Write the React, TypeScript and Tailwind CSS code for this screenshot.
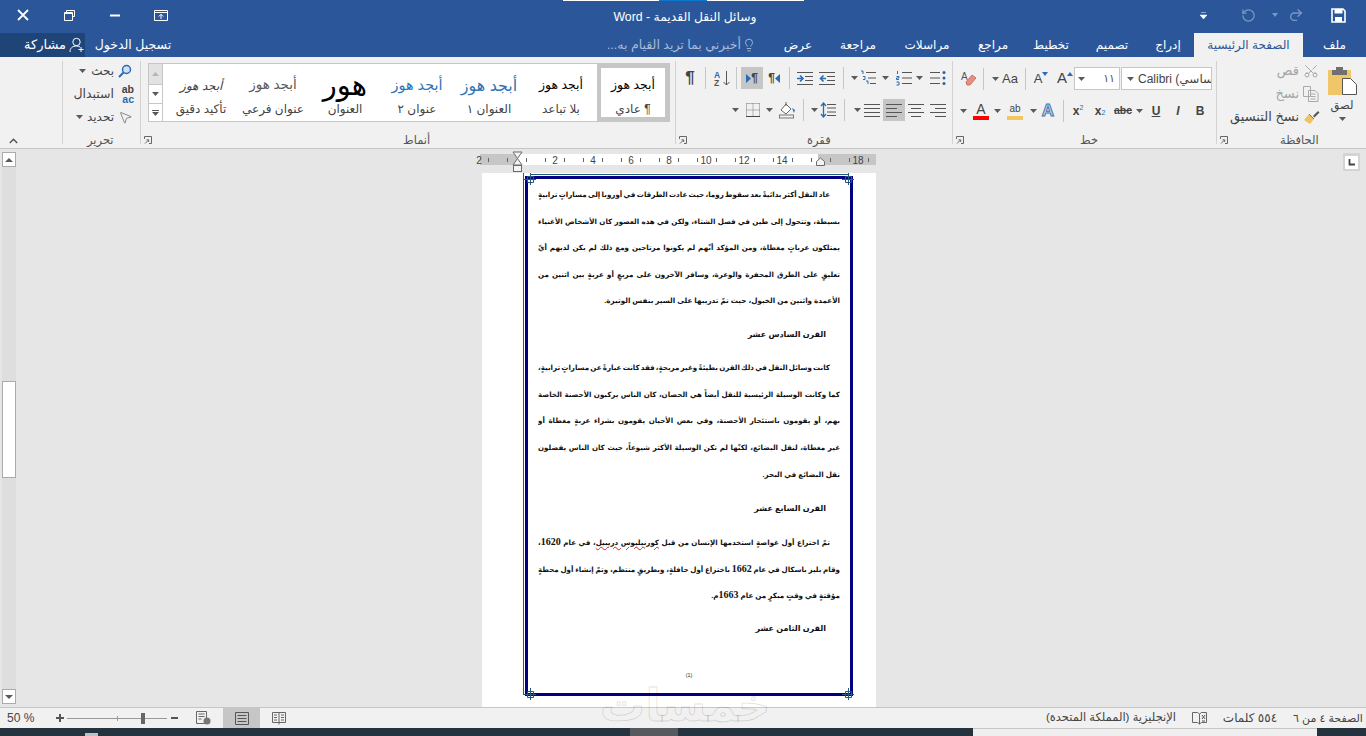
import React from "react";
import { RotateCcw, Redo2, Lightbulb, Scissors, MousePointer2 } from "lucide-react";

type P = { c?: string; children?: React.ReactNode };

const Drop = ({ c = "" }: { c?: string }) => (
  <span className={`flex h-[22px] w-[12px] shrink-0 items-center justify-center ${c}`}>
    <svg width="7" height="4"><path d="M0 0h7L3.5 4z" fill="#5a5a5a" /></svg>
  </span>
);
const Sep = ({ c = "" }: P) => <span className={`h-[22px] w-px shrink-0 bg-[#c6c6c6] ${c}`} />;
const Box = ({ c = "", children }: P) => (
  <span className={`flex h-[22px] shrink-0 items-center justify-center text-[#444] ${c}`}>{children}</span>
);

const Lines = ({ kind }: { kind: "j" | "l" | "c" | "r" }) => {
  const ys = [1.5, 5.5, 9.5, 13.5];
  const sp: Record<string, [number, number][]> = {
    j: [[0, 16], [0, 16], [0, 16], [0, 16]],
    l: [[0, 16], [0, 11], [0, 16], [0, 11]],
    c: [[0, 16], [3, 13], [0, 16], [3, 13]],
    r: [[0, 16], [5, 16], [0, 16], [5, 16]],
  };
  return (
    <svg width="16" height="15">
      {ys.map((y, i) => (
        <line key={y} x1={sp[kind][i][0]} x2={sp[kind][i][1]} y1={y} y2={y} stroke="#555" />
      ))}
    </svg>
  );
};

const Launcher = () => (
  <svg width="8" height="8" className="shrink-0">
    <path d="M.5 3V.5H7.5V7.5H5" fill="none" stroke="#666" />
    <path d="M1 7.5L4.5 4M2.5 3.8h2.2V6" fill="none" stroke="#666" />
  </svg>
);

const Indent = ({ out }: { out?: boolean }) => (
  <svg width="16" height="15">
    <path d="M0 1.5h16M8 5.5h8M8 9.5h8M0 13.5h16" stroke="#555" />
    {out ? <path d="M7 7.5H2M4.5 4.5L1.5 7.5l3 3" stroke="#2b6cb0" strokeWidth="1.6" fill="none" /> : <path d="M0 7.5h5M3 4.5l3 3-3 3" stroke="#2b6cb0" strokeWidth="1.6" fill="none" />}
  </svg>
);

const Group = ({ w, label, launcher, labelC = "", children }: { w: string; label?: string; launcher?: boolean; labelC?: string; children?: React.ReactNode }) => (
  <section className={`${w} flex h-[83px] shrink-0 flex-col border-l border-[#d2d2d2]`}>
    <div className="h-[72px] shrink-0">{children}</div>
    <div className="flex h-[14px] shrink-0 items-center pl-[3px]">
      {launcher && <Launcher />}
      {label && <span dir="rtl" className={`text-[11.5px] leading-[14px] text-[#555] ${labelC}`}>{label}</span>}
    </div>
  </section>
);

const Style = ({ sample, label, s, sel }: { sample: string; label: string; s: string; sel?: boolean }) => (
  <div className={`flex h-full w-[72px] shrink-0 flex-col items-center ${sel ? "border-[4px] border-[#c6c6c6]" : "border-[4px] border-transparent"}`}>
    <div dir="rtl" className={`flex h-[35px] items-center whitespace-nowrap ${s}`}>{sample}</div>
    <div dir="rtl" className="h-[12px] whitespace-nowrap text-[12px] leading-[12px] text-[#444]">{label}</div>
  </div>
);

const Body = ({ children, c = "" }: P) => <div dir="rtl" className={`h-[26.5px] overflow-hidden text-justify text-[7.1px] leading-[26.5px] [text-align-last:justify] [word-spacing:-1.5px] ${c}`}>{children}</div>;
const Last = ({ children, c = "" }: P) => <div dir="rtl" className={`h-[26.5px] whitespace-nowrap text-[7.2px] leading-[26.5px] ${c}`}>{children}</div>;
const Head = ({ children }: P) => <div dir="rtl" className="mt-[7px] h-[26.5px] whitespace-nowrap pr-[14px] text-[8px] leading-[26.5px]">{children}</div>;
const Num = ({ children }: P) => <span className="font-['Liberation_Serif',serif] text-[10px]">{children}</span>;
const Corner = ({ c, d }: { c: string; d: string }) => (
  <svg width="12" height="12" className={`absolute ${c}`}>
    <path d={d} fill="none" stroke="#1f5a80" />
  </svg>
);

export default function App() {
  const tick = [];
  for (let x = 488; x < 876; x += 19) tick.push(x - 480);
  const nums: [number, string][] = [[479, "2"], [555, "2"], [593, "4"], [631, "6"], [669, "8"], [706, "10"], [744, "12"], [782, "14"], [858, "18"]];
  return (
    <div className="relative flex h-[736px] w-[1366px] flex-col overflow-hidden bg-[#e6e6e6] font-['Liberation_Sans','DejaVu_Sans',sans-serif] text-[#444]">
      {/* title bar */}
      <header className="flex h-[33px] shrink-0 flex-col bg-[#2b579a] text-white">
        <div className="flex h-px">
          <div className="ml-[563px] w-[96px] bg-white" />
          <div className="w-[48px] bg-[#0a78d0]" />
          <div className="w-[97px] bg-white" />
        </div>
        <div className="flex h-[32px] items-center">
          <div className="mb-[4px] flex w-[184px] items-center">
            <span className="flex w-[46px] justify-center">
              <svg width="12" height="12"><path d="M1 1l10 10M11 1L1 11" stroke="#fff" strokeWidth="1.8" /></svg>
            </span>
            <span className="flex w-[46px] justify-center">
              <svg width="11" height="11"><path d="M2.5 2.5V.5h8v6h-2" fill="none" stroke="#fff" /><path d="M.5 2.5h8v8h-8z" fill="none" stroke="#fff" /><path d="M.5 3.5h8" stroke="#fff" /></svg>
            </span>
            <span className="flex w-[46px] justify-center">
              <svg width="10" height="3"><path d="M0 1.5h10" stroke="#fff" strokeWidth="2" /></svg>
            </span>
            <span className="flex w-[46px] justify-center">
              <svg width="14" height="11"><path d="M.5 .5h13v10H.5zM.5 2.5h13" fill="none" stroke="#fff" /><path d="M7 9V4.5M4.8 6.5L7 4.3l2.2 2.2" fill="none" stroke="#fff" /></svg>
            </span>
          </div>
          <div dir="rtl" className="ml-[401px] w-[200px] text-center text-[12.300px] leading-[16px] text-white">وسائل النقل القديمة - Word</div>
          <div className="ml-auto mb-[4px] flex items-center pr-[16px]">
            <span className="flex w-[16px] justify-center">
              <svg width="7" height="7"><path d="M1 .5h5M0 3h7L3.5 7z" fill="#fff" stroke="#fff" strokeWidth=".5" /></svg>
            </span>
            <span className="ml-[25px] flex w-[24px] justify-center text-[#7a97c6]"><RotateCcw size={15} strokeWidth={2} /></span>
            <span className="ml-[9px] flex w-[12px] justify-center">
              <svg width="6" height="4"><path d="M0 0h6L3 4z" fill="#7a97c6" /></svg>
            </span>
            <span className="ml-[3px] flex w-[24px] justify-center text-[#7a97c6]"><Redo2 size={16} strokeWidth={2} /></span>
            <span className="ml-[18px] flex w-[24px] justify-center">
              <svg width="15" height="15"><path d="M1 1h11l2 2v11H1z" fill="none" stroke="#fff" strokeWidth="1.6" /><path d="M3.5 1h8v4.5h-8z" fill="#fff" /><path d="M4 9h7v5H4z" fill="#fff" /></svg>
            </span>
          </div>
        </div>
      </header>

      {/* tabs */}
      <nav className="flex h-[24px] shrink-0 items-center bg-[#2b579a] text-[12px] text-white">
        <div dir="rtl" className="flex h-full w-[85px] flex-row-reverse items-center justify-end gap-[3px] bg-[#1e4478] pl-[11px] text-[13px]">
          <span className="whitespace-nowrap">مشاركة</span>
          <svg width="16" height="16" className="shrink-0">
            <circle cx="7.5" cy="5" r="3.7" fill="none" stroke="#fff" />
            <path d="M1 15c0-4 2.5-6 6.500-6 1.500 0 2.500.3 3.500 1" fill="none" stroke="#fff" />
            <path d="M12 10v5M9.500 12.500h5" stroke="#fff" />
          </svg>
        </div>
        <div dir="rtl" className="w-[96px] whitespace-nowrap text-center text-[12.500px]">تسجيل الدخول</div>
        <div dir="rtl" className="ml-[426px] w-[134px] whitespace-nowrap text-center text-[12.500px] text-[#a8bbd8]">أخبرني بما تريد القيام به...</div>
        <span className="flex w-[27px] justify-start pl-[1px] text-[#b9c9e0]"><Lightbulb size={14} strokeWidth={1.4} /></span>
        {[
          ["w-[60px]", "عرض"],
          ["w-[60px]", "مراجعة"],
          ["w-[78px]", "مراسلات"],
          ["w-[54px]", "مراجع"],
          ["w-[62px]", "تخطيط"],
          ["w-[60px]", "تصميم"],
          ["w-[52px]", "إدراج"],
        ].map(([w, t]) => (
          <div key={t} dir="rtl" className={`${w} whitespace-nowrap text-center`}>{t}</div>
        ))}
        <div dir="rtl" className="flex h-full w-[109px] items-center justify-center whitespace-nowrap bg-[#f1f1f1] text-[#2b579a]">الصفحة الرئيسية</div>
        <div dir="rtl" className="w-[63px] text-center">ملف</div>
      </nav>

      {/* ribbon */}
      <div className="flex h-[92px] shrink-0 border-b border-[#c6c6c6] bg-[#f1f1f1] pt-[4px]">
        <div className="flex h-[83px] w-[62px] shrink-0 items-end pl-[9px]">
          <svg width="9" height="6"><path d="M.8 5L4.500 1.300 8.200 5" fill="none" stroke="#555" strokeWidth="1.5" /></svg>
        </div>

        {/* editing */}
        <Group w="w-[78px]" label="تحرير" labelC="ml-[21px]">
          <div className="flex flex-col gap-[3px] pr-[6px] text-[12px] text-[#444]">
            <div className="flex h-[20px] items-center justify-end">
              <Drop />
              <span dir="rtl" className="ml-[3px] whitespace-nowrap">بحث</span>
              <span className="ml-[2px] flex w-[18px] justify-center">
                <svg width="14" height="14"><circle cx="8.500" cy="5.500" r="4" fill="#cfe0f3" stroke="#2b6cb0" strokeWidth="1.5" /><path d="M5.500 8.500L1 13" stroke="#2b6cb0" strokeWidth="2" /></svg>
              </span>
            </div>
            <div className="flex h-[20px] items-center justify-end">
              <span dir="rtl" className="whitespace-nowrap text-[12.500px]">استبدال</span>
              <span className="ml-[2px] flex w-[18px] flex-col items-end text-[10.500px] font-bold leading-[10px]">
                <span className="text-[#444]">ab</span>
                <span className="text-[#2b6cb0]">ac</span>
              </span>
            </div>
            <div className="flex h-[20px] items-center justify-end">
              <Drop />
              <span dir="rtl" className="ml-[1px] whitespace-nowrap">تحديد</span>
              <span className="ml-[2px] flex w-[18px] justify-center text-[#666]"><MousePointer2 size={15} strokeWidth={1.2} className="rotate-[0deg]" /></span>
            </div>
          </div>
        </Group>

        {/* styles */}
        <Group w="w-[535px]" label="أنماط" launcher labelC="ml-[251px]">
          <div className="ml-[7px] mt-[2px] flex h-[59px] w-[522px] border border-[#c6c6c6] bg-white">
            <div className="flex w-[14px] shrink-0 flex-col border-r border-[#c6c6c6]">
              <div className="flex h-[20px] items-center justify-center bg-[#e2e2e2]"><svg width="7" height="4"><path d="M0 4h7L3.500 0z" fill="#b5b5b5" /></svg></div>
              <div className="flex h-[19px] items-center justify-center border-t border-[#c6c6c6]"><svg width="7" height="4"><path d="M0 0h7L3.500 4z" fill="#5a5a5a" /></svg></div>
              <div className="flex h-[18px] flex-col items-center justify-center gap-[1px] border-t border-[#c6c6c6]"><div className="h-px w-[7px] bg-[#5a5a5a]" /><svg width="7" height="4"><path d="M0 0h7L3.500 4z" fill="#5a5a5a" /></svg></div>
            </div>
            <div className="flex h-full flex-1 items-stretch pl-[2px]">
              <Style sample="أبجد هوز" label="تأكيد دقيق" s="text-[12px] italic text-[#404040]" />
              <Style sample="أبجد هوز" label="عنوان فرعي" s="text-[13.500px] text-[#5a5a5a]" />
              <Style sample="هور" label="العنوان" s="text-[29px] text-black" />
              <Style sample="أبجد هوز" label="عنوان ٢" s="text-[14.500px] text-[#2e74b5]" />
              <Style sample="أبجد هوز" label="العنوان ١" s="text-[16px] text-[#2e74b5]" />
              <Style sample="أبجد هوز" label="بلا تباعد" s="text-[12.500px] text-black" />
              <Style sample="أبجد هوز" label="¶ عادي" s="text-[12.500px] text-black" sel />
            </div>
          </div>
        </Group>

        {/* paragraph */}
        <Group w="w-[277px]" label="فقرة" launcher labelC="ml-[120px]">
          <div className="flex flex-col gap-[10px] pt-[6px]">
            <div className="flex items-center">
              <Box c="ml-[3px] w-[22px] text-[17px] font-bold">¶</Box>
              <Sep c="ml-[4px]" />
              <Box c="ml-[5px] w-[22px]">
                <svg width="17" height="17"><text x="0" y="8" fontSize="8.500" fontWeight="700" fill="#2b6cb0">A</text><text x="0" y="16" fontSize="8.500" fontWeight="700" fill="#555">Z</text><path d="M12.500 1v14M9.500 12l3 3 3-3" fill="none" stroke="#555" /></svg>
              </Box>
              <Sep c="ml-[3px]" />
              <Box c="ml-[4px] w-[22px] bg-[#c6c6c6] text-[12px] font-bold">
                <svg width="5" height="9"><path d="M0 0l5 4.500L0 9z" fill="#2b6cb0" /></svg>¶
              </Box>
              <Box c="w-[22px] text-[12px] font-bold">
                ¶<svg width="5" height="9"><path d="M5 0L0 4.500 5 9z" fill="#2b6cb0" /></svg>
              </Box>
              <Sep c="ml-[4px]" />
              <Box c="ml-[4px] w-[22px]"><Indent /></Box>
              <Box c="w-[22px]"><Indent out /></Box>
              <Sep c="ml-[5px]" />
              <Drop c="ml-[4px]" />
              <Box c="w-[16px]">
                <svg width="16" height="16"><path d="M6 2.500h10M8 8h8M10 13.500h6" stroke="#555" /><path d="M1 1h2v3M3 6.500h2v3H3M6 11h2v3" fill="none" stroke="#2b6cb0" /></svg>
              </Box>
              <Drop c="ml-[3px]" />
              <Box c="ml-[5px] w-[16px]">
                <svg width="16" height="16"><path d="M6 2.500h10M6 8h10M6 13.500h10" stroke="#555" /><path d="M1.500 1v3M.5 6.500h2.500v1.500H.5v1.500H3M.5 12h2.500v3H.5" fill="none" stroke="#2b6cb0" /></svg>
              </Box>
              <Drop c="ml-[1px]" />
              <Box c="ml-[5px] w-[16px]">
                <svg width="16" height="16"><path d="M0 2.500h10M0 8h10M0 13.500h10" stroke="#555" /><circle cx="14" cy="2.500" r="1.500" fill="#2b5f9e" /><circle cx="14" cy="8" r="1.500" fill="#2b5f9e" /><circle cx="14" cy="13.500" r="1.500" fill="#2b5f9e" /></svg>
              </Box>
            </div>
            <div className="flex items-center">
              <Drop c="ml-[53px]" />
              <Box c="ml-[4px] w-[16px]">
                <svg width="14" height="14"><path d="M.5 .5h13M.5 7h13M.5 .5v13M7 .5v13M13.500 .5v13" stroke="#777" strokeDasharray="1 1" /><path d="M0 13.500h14" stroke="#444" /></svg>
              </Box>
              <Drop c="ml-[2px]" />
              <Box c="ml-[3px] w-[18px]">
                <svg width="18" height="18"><path d="M3 9l5-6 5 5-5 5z" fill="#fff" stroke="#666" /><path d="M8 1v4" stroke="#666" /><path d="M14 7l3 2-1 3z" fill="#2b6cb0" /><rect x="1.500" y="14" width="14" height="3" fill="#f1f1f1" stroke="#777" /></svg>
              </Box>
              <Sep c="ml-[7px]" />
              <Drop c="ml-[4px]" />
              <Box c="w-[16px]">
                <svg width="16" height="16"><path d="M7 2.500h9M7 6h9M7 10h9M7 13.500h9" stroke="#555" /><path d="M3.500 2v12M1 4l2.500-3L6 4M1 12l2.500 3L6 12" fill="none" stroke="#2b6cb0" strokeWidth="1.300" /></svg>
              </Box>
              <Sep c="ml-[8px]" />
              <Drop c="ml-[6px]" />
              <Box c="w-[18px]"><Lines kind="j" /></Box>
              <Box c="ml-[2px] w-[22px] bg-[#c6c6c6]"><Lines kind="l" /></Box>
              <Box c="w-[22px]"><Lines kind="c" /></Box>
              <Box c="w-[22px]"><Lines kind="r" /></Box>
            </div>
          </div>
        </Group>

        {/* font */}
        <Group w="w-[264px]" label="خط" launcher labelC="ml-[116px]">
          <div className="flex flex-col gap-[10px] pt-[6px]">
            <div className="flex items-center">
              <Box c="ml-[7px] w-[18px]">
                <svg width="16" height="16"><text x="0" y="9" fontSize="10" fill="#555">A</text><path d="M5 11l6-7 4 3-6 7H6z" fill="#e88d84" stroke="#d27068" /></svg>
              </Box>
              <Sep c="ml-[5px]" />
              <Drop c="ml-[5px]" />
              <Box c="w-[18px] text-[13px]">Aa</Box>
              <Sep c="ml-[6px]" />
              <Box c="ml-[6px] w-[18px] text-[13px] relative">A<svg width="6" height="4" className="mb-[9px]"><path d="M0 0h6L3 4z" fill="#2b6cb0" /></svg></Box>
              <Box c="ml-[6px] w-[18px] text-[15px]">A<svg width="6" height="4" className="mb-[10px]"><path d="M0 4h6L3 0z" fill="#2b6cb0" /></svg></Box>
              <div className="flex h-[23px] w-[46px] shrink-0 items-center border border-[#c6c6c6] bg-white">
                <Drop />
                <span className="ml-auto pr-[4px] text-[11px] text-[#555]">١١</span>
              </div>
              <div className="ml-px flex h-[23px] w-[91px] shrink-0 items-center overflow-hidden border border-[#c6c6c6] bg-white">
                <Drop c="ml-[2px]" />
                <span className="ml-[2px] whitespace-nowrap text-[12px] text-[#444]">Calibri (أساسي)</span>
              </div>
            </div>
            <div className="flex items-center">
              <Drop c="ml-[4px]" />
              <Box c="ml-[3px] h-[18px] w-[18px] flex-col">
                <span className="text-[14px] leading-[14px]">A</span>
                <span className="h-[4px] w-[16px] bg-[#ff0000]" />
              </Box>
              <Drop c="ml-px" />
              <Box c="ml-[3px] h-[18px] w-[18px] flex-col">
                <span className="text-[10px] leading-[14px]">ab</span>
                <span className="h-[4px] w-[16px] bg-[#f2c75c]" />
              </Box>
              <Drop c="ml-[3px]" />
              <Box c="w-[18px] text-[17px] font-bold text-[#cfe0f3] [-webkit-text-stroke:1px_#3a72b0]">A</Box>
              <Sep c="ml-[6px]" />
              <Box c="ml-[4px] w-[20px] text-[12px] font-bold">x<sup className="text-[7px] font-normal text-[#2b6cb0]">2</sup></Box>
              <Box c="ml-[2px] w-[20px] text-[12px] font-bold">x<sub className="text-[7px] font-normal text-[#2b6cb0]">2</sub></Box>
              <Box c="ml-[2px] w-[22px] text-[10.500px] font-bold line-through">abc</Box>
              <Drop c="-ml-px" />
              <Box c="ml-[2px] w-[18px] text-[12px] font-bold underline">U</Box>
              <Box c="ml-[4px] w-[18px] text-[12px] italic font-bold">I</Box>
              <Box c="ml-[4px] w-[18px] text-[12px] font-bold">B</Box>
            </div>
          </div>
        </Group>

        {/* clipboard */}
        <Group w="w-[150px]" label="الحافظة" launcher labelC="ml-[52px]">
          <div className="flex">
            <div className="flex w-[103px] flex-col gap-[3px] text-[13px]">
              <div className="flex h-[20px] items-center justify-end text-[#a4a4a4]">
                <span dir="rtl">قص</span>
                <span className="ml-[3px] flex w-[18px] justify-center"><Scissors size={16} strokeWidth={1.4} className="-rotate-90" /></span>
              </div>
              <div className="flex h-[20px] items-center justify-end text-[#a4a4a4]">
                <span dir="rtl">نسخ</span>
                <span className="ml-[3px] flex w-[18px] justify-center">
                  <svg width="16" height="16"><path d="M.5 .5h7v10h-7zM5.500 4.500H12l3 3v8H5.500zM7.500 8h5M7.500 10.500h5M7.500 13h5" fill="#f1f1f1" stroke="#a9a9a9" /></svg>
                </span>
              </div>
              <div className="flex h-[20px] items-center justify-end text-[#444]">
                <span dir="rtl" className="whitespace-nowrap">نسخ التنسيق</span>
                <span className="ml-[3px] flex w-[18px] justify-center">
                  <svg width="17" height="15"><path d="M1 10l5-6 5 5-4 5z" fill="#efc263" /><path d="M10 6l5-5 1.500 1.500-5 5" fill="#555" /><path d="M6 4l5 5" stroke="#777" /></svg>
                </span>
              </div>
            </div>
            <div className="flex w-[44px] flex-col items-center pt-[6px]">
              <svg width="29" height="28">
                <rect x="0" y="3" width="23" height="25" fill="#f0c668" />
                <rect x="4" y="3" width="15" height="5" fill="#707070" />
                <rect x="8" y="0" width="7" height="4" fill="#707070" />
                <path d="M3 11h.01M7 15h.01M11 12h.01M4 19h.01M9 21h.01M5 24h.01" stroke="#e58c6f" strokeWidth="1.500" />
                <path d="M14.500 11.500h8l6 6v10h-14z" fill="#fff" stroke="#555" />
              </svg>
              <span dir="rtl" className="mt-[3px] text-[11.5px] leading-[15px] text-[#444]">لصق</span>
              <svg width="7" height="4" className="mt-[4px]"><path d="M0 0h7L3.500 4z" fill="#5a5a5a" /></svg>
            </div>
          </div>
        </Group>
      </div>

      {/* document */}
      <main className="flex h-[558px] shrink-0">
        <div className="flex w-[16px] shrink-0 flex-col pb-[3px] pl-[2px] pt-[3px]">
          <div className="flex h-[15px] w-[14px] items-center justify-center border border-[#ababab] bg-white"><svg width="8" height="4"><path d="M0 4h8L4 0z" fill="#5a5a5a" /></svg></div>
          <div className="flex-1 bg-[#dedede] pt-[214px]"><div className="h-[97px] w-[14px] border border-[#ababab] bg-white" /></div>
          <div className="flex h-[15px] w-[14px] items-center justify-center border border-[#ababab] bg-white"><svg width="8" height="4"><path d="M0 0h8L4 4z" fill="#5a5a5a" /></svg></div>
        </div>

        <div className="ml-[466px] flex h-full w-[394px] shrink-0 flex-col pt-[5px]">
          <svg width="396" height="11" className="-ml-[2px] mb-[8px] shrink-0 overflow-visible">
            <rect x="0" y="0" width="396" height="11" fill="#c6c6c6" />
            <rect x="37" y="0" width="301" height="11" fill="#fff" />
            {tick.map((x) => (
              <line key={x} x1={x + 0.5} x2={x + 0.5} y1="4" y2="8" stroke="#666" />
            ))}
            {nums.map(([x, t]) => (
              <text key={x} x={x - 480} y="9.500" fontSize="10" textAnchor="middle" fill="#444" fontFamily="Liberation Sans">{t}</text>
            ))}
            <path d="M33 -2h9l-4.500 6.500 4.500 6.500h-9l4.500-6.500z" fill="#f4f4f4" stroke="#6a6a6a" />
            <rect x="33.500" y="11.500" width="8" height="6" fill="#f4f4f4" stroke="#6a6a6a" />
            <path d="M336.500 11.500v-4l4-3.500 4 3.500v4z" fill="#f4f4f4" stroke="#6a6a6a" />
          </svg>

          <div className="relative min-h-0 flex-1 bg-white pt-[3px]">
            <div className="absolute left-[41px] top-0 h-[522px] w-px bg-[#1f5a80]" />
            <div className="absolute left-[48px] top-[1px] h-px w-[318px] bg-[#1f5a80]" />
            <div className="ml-[43px] flex h-[520px] w-[328px] flex-col border-[3px] border-[#000080] px-[10px] pt-[3px] font-bold text-[#111]">
              <Body c="pr-[10px]">عاد النقل أكثر بدائيةً بعد سقوط روما، حيث عادت الطرقات في أوروبا إلى مساراتٍ ترابيةٍ</Body>
              <Body>بسيطة، وتتحول إلى طين في فصل الشتاء، ولكن في هذه العصور كان الأشخاص الأغنياء</Body>
              <Body>يمتلكون عرباتٍ مغطاة، ومن المؤكد أنّهم لم يكونوا مرتاحين ومع ذلك لم يكن لديهم أيّ</Body>
              <Body>تعليقٍ على الطرق المحفرة والوعرة، وسافر الآخرون على مربعٍ أو عربةٍ بين اثنين من</Body>
              <Last>الأعمدة واثنين من الخيول، حيث تمّ تدريبها على السير بنفس الوتيرة.</Last>
              <Head>القرن السادس عشر</Head>
              <Body c="mt-[7px] pr-[10px]">كانت وسائل النقل في ذلك القرن بطيئةً وغير مريحةٍ، فقد كانت عبارةً عن مساراتٍ ترابيةٍ،</Body>
              <Body>كما وكانت الوسيلة الرئيسية للنقل أيضاً هي الحصان، كان الناس يركبون الأحصنة الخاصة</Body>
              <Body>بهم، أو يقومون باستئجار الأحصنة، وفي بعض الأحيان يقومون بشراء عربةٍ مغطاة أو</Body>
              <Body>غير مغطاة، لنقل البضائع، لكنّها لم تكن الوسيلة الأكثر شيوعاً، حيث كان الناس يفضلون</Body>
              <Last c="mt-[1px]">نقل البضائع في البحر.</Last>
              <Head>القرن السابع عشر</Head>
              <Body c="mt-[7px] pr-[10px]">تمّ اختراع أول غواصةٍ استخدمها الإنسان من قبل <span className="underline decoration-[#e02020] decoration-wavy">كورنيليوس دريبيل</span>، في عام <Num>1620</Num>،</Body>
              <Body>وقام بليز باسكال في عام <Num>1662</Num> باختراع أول حافلةٍ، وبطريقٍ منتظم، وتمّ إنشاء أول محطةٍ</Body>
              <Last>مؤقتةٍ في وقتٍ مبكرٍ من عام <Num>1663</Num>م.</Last>
              <Head>القرن الثامن عشر</Head>
              <div className="mb-[14px] mt-auto text-center text-[5.500px] font-normal leading-[8px] text-[#333]">(1)</div>
            </div>
            <Corner c="left-[42px] top-0" d="M6.500 0v12M0 6.500h12M3.500 3.500h6v6h-6z" />
            <Corner c="left-[360px] top-0" d="M6.500 0v12M0 6.500h12M3.500 3.500h6v6h-6z" />
            <Corner c="left-[42px] top-[515px]" d="M6.500 0v12M0 6.500h12M3.500 3.500h6v6h-6z" />
            <Corner c="left-[360px] top-[515px]" d="M6.500 0v12M0 6.500h12M3.500 3.500h6v6h-6z" />
          </div>
        </div>

        <div className="ml-auto mr-[6px] mt-[4px] flex h-[18px] w-[17px] items-center justify-center bg-[#d4d4d4]">
          <div className="flex h-[13px] w-[13px] items-center justify-center bg-white">
            <svg width="7" height="7"><path d="M1.500 0v5.500H7" fill="none" stroke="#444" strokeWidth="1.800" /></svg>
          </div>
        </div>
      </main>

      {/* status */}
      <footer className="flex h-[21px] shrink-0 items-center border-t border-[#c6c6c6] bg-[#f1f1f1] text-[11px] text-[#444]">
        <span className="ml-[7px] w-[46px] whitespace-nowrap text-[12px]">50 %</span>
        <span className="flex w-[14px] justify-center"><svg width="8" height="8"><path d="M4 0v8M0 4h8" stroke="#555" strokeWidth="2" /></svg></span>
        <div className="relative h-px w-[100px] bg-[#9a9a9a]">
          <div className="absolute left-[50px] top-[-2px] h-[5px] w-px bg-[#9a9a9a]" />
          <div className="absolute left-[74px] top-[-5px] h-[11px] w-[4px] bg-[#666]" />
        </div>
        <span className="ml-[3px] flex w-[8px] justify-center"><svg width="7" height="2"><path d="M0 1h7" stroke="#555" strokeWidth="2" /></svg></span>
        <span className="ml-[16px] flex w-[18px] justify-center">
          <svg width="15" height="14"><path d="M.5 .5h10v12H.5zM2.500 3h6M2.500 5.500h6M2.500 8h3" fill="none" stroke="#666" /><circle cx="11" cy="10" r="3.500" fill="#777" /></svg>
        </span>
        <span className="ml-[11px] flex h-full w-[37px] items-center justify-center bg-[#c6c6c6]">
          <svg width="14" height="13"><path d="M.5 .5h13v12H.5zM2.500 3.500h9M2.500 6.500h9M2.500 9.500h9" fill="none" stroke="#555" /></svg>
        </span>
        <span className="ml-[10px] flex w-[18px] justify-center">
          <svg width="14" height="13"><path d="M.5 .5h13v10H.5zM7 .5v12M2 3h3M2 5.500h3M2 8h3M9 3h3M9 5.500h3M9 8h3" fill="none" stroke="#666" /></svg>
        </span>
        <div dir="rtl" className="ml-[746px] w-[154px] whitespace-nowrap text-center text-[11.500px]">الإنجليزية (المملكة المتحدة)</div>
        <span className="ml-[3px] flex w-[16px] justify-center">
          <svg width="15" height="13"><path d="M.5 .5h5l2 1.500v10l-2-1.500h-5zM7.500 2l2-1.500h5v10h-5l-2 1.500" fill="none" stroke="#666" /><path d="M10 3l3 4M13 3l-3 4M10 9h3" stroke="#555" /></svg>
        </span>
        <div dir="rtl" className="ml-[3px] w-[80px] whitespace-nowrap text-center text-[12px]">٥٥٤ كلمات</div>
        <div dir="rtl" className="w-[76px] whitespace-nowrap text-center">الصفحة ٤ من ٦</div>
      </footer>

      {/* taskbar strip */}
      <div className="flex h-[8px] shrink-0 bg-[#24333d]">
        <div className="ml-[85px] mt-[5px] h-[3px] w-[13px] bg-white/70" />
        <div className="ml-[532px] w-[48px] bg-[#565a5e]" />
        <div className="ml-[295px] w-[344px] border-t border-[#c6c6c6] bg-[#efefef]" />
      </div>

      {/* watermark */}
      <div dir="rtl" className="absolute left-[600px] top-[676px] whitespace-nowrap text-[45px] font-bold leading-[60px] text-transparent [-webkit-text-stroke:1px_rgba(0,0,0,0.13)]">خمسات</div>
    </div>
  );
}
